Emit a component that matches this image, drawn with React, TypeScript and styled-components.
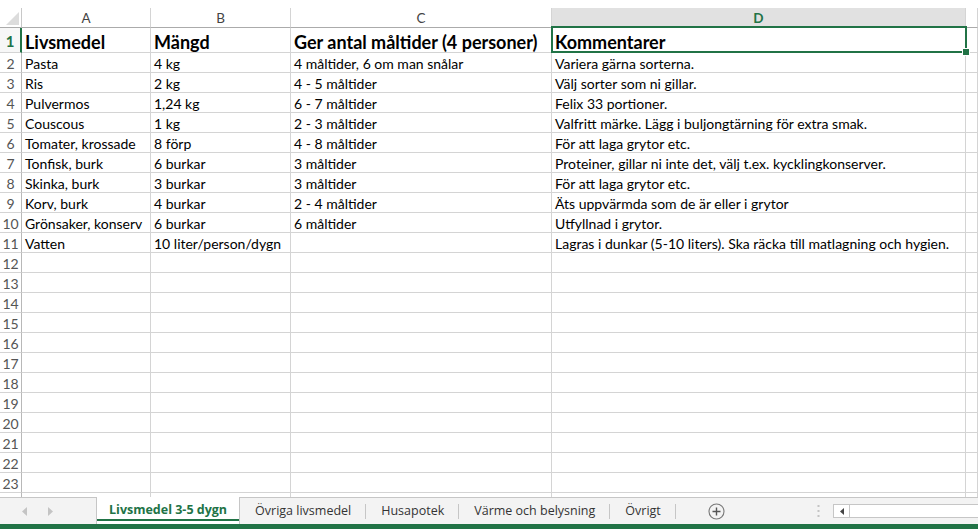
import React from "react";
import styled, { createGlobalStyle, css } from "styled-components";

const GREEN = "#217346";
const GRID = "#d4d4d4";

const Global = createGlobalStyle`
  html, body { margin: 0; padding: 0; background: #fff; }
  body { width: 978px; height: 529px; overflow: hidden; font-family: Lato, "Liberation Sans", sans-serif; }
  #root { width: 978px; height: 529px; }
`;

const Page = styled.div`
  display: flex;
  flex-direction: column;
  width: 978px;
  height: 529px;
  overflow: hidden;
  background: #fff;
`;

const TopGap = styled.div`
  height: 8px;
  flex: none;
`;

const Grid = styled.div`
  flex: 1;
  min-height: 0;
  overflow: hidden;
  display: grid;
  grid-template-columns: 22px 129px 140px 261px 414px 1fr;
  grid-template-rows: 20px 25px repeat(23, 20px);
  align-content: start;
`;

const Corner = styled.div`
  position: relative;
  border-right: 1px solid #c8c8c8;
  border-bottom: 1px solid #ababab;
  box-sizing: border-box;
  svg { position: absolute; right: 2px; bottom: 2px; }
`;

const ColHead = styled.div<{ $active?: boolean }>`
  box-sizing: border-box;
  display: flex;
  align-items: center;
  justify-content: center;
  font-size: 13.5px;
  color: #444;
  border-right: 1px solid ${GRID};
  border-bottom: 1px solid #ababab;
  background: #fff;
  ${(p) =>
    p.$active &&
    css`
      background: #e1e1e1;
      color: ${GREEN};
      font-weight: 700;
      border-bottom-color: ${GREEN};
    `}
`;

const RowHead = styled.div<{ $active?: boolean }>`
  box-sizing: border-box;
  display: flex;
  align-items: center;
  justify-content: center;
  font-size: 14px;
  color: #555;
  border-right: 1px solid #b8b8b8;
  border-bottom: 1px solid ${GRID};
  padding-top: 1px;
  ${(p) =>
    p.$active &&
    css`
      color: ${GREEN};
      font-weight: 700;
      font-size: 15px;
      border-right: 2px solid ${GREEN};
      background: #f7f7f7;
    `}
`;

const Cell = styled.div<{ $head?: boolean }>`
  position: relative;
  box-sizing: border-box;
  display: flex;
  align-items: center;
  padding: 1px 0 0 3px;
  white-space: nowrap;
  overflow: visible;
  font-size: 14px;
  color: #000;
  border-right: 1px solid ${GRID};
  border-bottom: 1px solid ${GRID};
  ${(p) =>
    p.$head &&
    css`
      font-size: 18px;
      font-weight: 700;
      padding-top: 3px;
    `}
`;

const Selection = styled.div`
  position: absolute;
  left: -1px;
  top: -2px;
  right: -2px;
  bottom: -1px;
  border: 2px solid ${GREEN};
  pointer-events: none;
  z-index: 2;
`;

const FillHandle = styled.div`
  position: absolute;
  right: -5px;
  bottom: -5px;
  width: 6px;
  height: 6px;
  background: ${GREEN};
  border: 1px solid #fff;
`;

const TabBar = styled.div`
  height: 27px;
  flex: none;
  display: flex;
  align-items: stretch;
  background: #f3f3f3;
  border-top: 1px solid #c6c6c6;
  box-sizing: border-box;
  font-family: "Open Sans", "Noto Sans", sans-serif;
  font-size: 12.5px;
  color: #333;
`;

const Nav = styled.div`
  width: 96px;
  display: flex;
  align-items: center;
  padding-left: 22px;
  gap: 19px;
  box-sizing: border-box;
`;

const Tab = styled.div<{ $active?: boolean }>`
  position: relative;
  display: flex;
  align-items: center;
  padding: 0 15px 2px;
  white-space: nowrap;
  &::after {
    content: "";
    position: absolute;
    right: 0;
    top: 6px;
    bottom: 5px;
    width: 1px;
    background: #c6c6c6;
  }
  ${(p) =>
    p.$active &&
    css`
      background: #fff;
      margin-top: -1px;
      border-left: 1px solid #c6c6c6;
      border-right: 1px solid #c6c6c6;
      color: ${GREEN};
      font-weight: 700;
      padding: 0 12px 2px;
      &::after {
        left: 0;
        right: 0;
        top: auto;
        bottom: 3px;
        width: auto;
        height: 2px;
        background: ${GREEN};
      }
    `}
`;

const AddSheet = styled.div`
  display: flex;
  align-items: center;
  margin-left: 32px;
`;

const Spacer = styled.div`
  flex: 1;
`;

const Splitter = styled.div`
  display: flex;
  align-items: center;
  width: 16px;
`;

const HScroll = styled.div`
  width: 145px;
  display: flex;
  align-items: center;
`;

const Track = styled.div`
  flex: 1;
  height: 14px;
  display: flex;
  background: #fff;
  border: 1px solid #c6c6c6;
  border-right: none;
  box-sizing: border-box;
`;

const ArrowBtn = styled.div`
  width: 15px;
  display: flex;
  align-items: center;
  justify-content: center;
  border-right: 1px solid #c6c6c6;
`;

const StatusBar = styled.div`
  height: 5px;
  flex: none;
  background: ${GREEN};
`;

const rows: [string, string, string, string][] = [
  ["Pasta", "4 kg", "4 måltider, 6 om man snålar", "Variera gärna sorterna."],
  ["Ris", "2 kg", "4 - 5 måltider", "Välj sorter som ni gillar."],
  ["Pulvermos", "1,24 kg", "6 - 7 måltider", "Felix 33 portioner."],
  ["Couscous", "1 kg", "2 - 3 måltider", "Valfritt märke. Lägg i buljongtärning för extra smak."],
  ["Tomater, krossade", "8 förp", "4 - 8 måltider", "För att laga grytor etc."],
  ["Tonfisk, burk", "6 burkar", "3 måltider", "Proteiner, gillar ni inte det, välj t.ex. kycklingkonserver."],
  ["Skinka, burk", "3 burkar", "3 måltider", "För att laga grytor etc."],
  ["Korv, burk", "4 burkar", "2 - 4 måltider", "Äts uppvärmda som de är eller i grytor"],
  ["Grönsaker, konserv", "6 burkar", "6 måltider", "Utfyllnad i grytor."],
  ["Vatten", "10 liter/person/dygn", "", "Lagras i dunkar (5-10 liters). Ska räcka till matlagning och hygien."],
];

const tabs = ["Livsmedel 3-5 dygn", "Övriga livsmedel", "Husapotek", "Värme och belysning", "Övrigt"];

export default function App() {
  const allRows: string[][] = [...rows];
  for (let i = 12; i <= 24; i++) allRows.push(["", "", "", ""]);

  return (
    <Page>
      <Global />
      <TopGap />
      <Grid>
        <Corner>
          <svg width="13" height="13" viewBox="0 0 13 13">
            <polygon points="13,0 13,13 0,13" fill="#dcdcdc" />
          </svg>
        </Corner>
        <ColHead>A</ColHead>
        <ColHead>B</ColHead>
        <ColHead>C</ColHead>
        <ColHead $active>D</ColHead>
        <ColHead />

        <RowHead $active>1</RowHead>
        <Cell $head>Livsmedel</Cell>
        <Cell $head>Mängd</Cell>
        <Cell $head>Ger antal måltider (4 personer)</Cell>
        <Cell $head>
          Kommentarer
          <Selection>
            <FillHandle />
          </Selection>
        </Cell>
        <Cell />

        {allRows.map((r, i) => (
          <React.Fragment key={i}>
            <RowHead>{i + 2 <= 23 ? i + 2 : ""}</RowHead>
            <Cell>{r[0]}</Cell>
            <Cell>{r[1]}</Cell>
            <Cell>{r[2]}</Cell>
            <Cell>{r[3]}</Cell>
            <Cell />
          </React.Fragment>
        ))}
      </Grid>
      <TabBar>
        <Nav>
          <svg width="6" height="9" viewBox="0 0 6 9">
            <polygon points="5,0 5,9 0,4.5" fill="#c4c4c4" />
          </svg>
          <svg width="6" height="9" viewBox="0 0 6 9">
            <polygon points="1,0 1,9 6,4.5" fill="#c4c4c4" />
          </svg>
        </Nav>
        {tabs.map((t, i) => (
          <Tab key={t} $active={i === 0}>
            {t}
          </Tab>
        ))}
        <AddSheet>
          <svg width="17" height="17" viewBox="0 0 17 17">
            <circle cx="8.5" cy="8.5" r="7.5" fill="none" stroke="#777" strokeWidth="1.1" />
            <path d="M8.5 4.5v8M4.5 8.5h8" stroke="#555" strokeWidth="1.4" />
          </svg>
        </AddSheet>
        <Spacer />
        <Splitter>
          <svg width="3" height="12" viewBox="0 0 3 12">
            <rect x="0.5" y="0" width="2" height="2" fill="#c4c4c4" />
            <rect x="0.5" y="5" width="2" height="2" fill="#c4c4c4" />
            <rect x="0.5" y="10" width="2" height="2" fill="#c4c4c4" />
          </svg>
        </Splitter>
        <HScroll>
          <Track>
            <ArrowBtn>
              <svg width="4" height="7" viewBox="0 0 4 7">
                <polygon points="4,0 4,7 0,3.5" fill="#444" />
              </svg>
            </ArrowBtn>
          </Track>
        </HScroll>
      </TabBar>
      <StatusBar />
    </Page>
  );
}
